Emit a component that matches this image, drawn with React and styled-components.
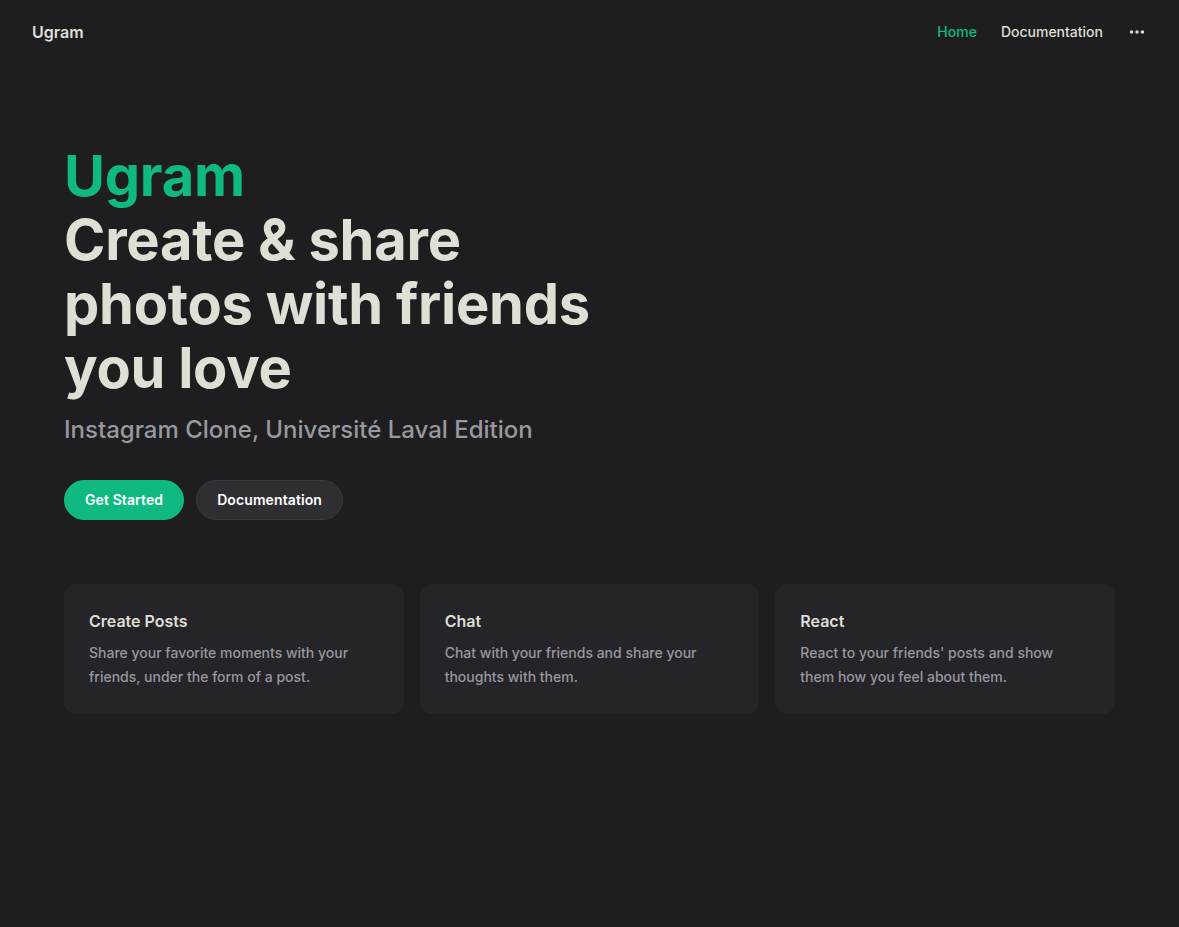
import styled, { createGlobalStyle } from 'styled-components';

const GlobalStyle = createGlobalStyle`
  html, body {
    margin: 0;
    padding: 0;
    background: #1e1e20;
    min-height: 100%;
  }
  body {
    font-family: Inter, "Noto Sans", "Liberation Sans", sans-serif;
    color: #dfdfd6;
    -webkit-font-smoothing: antialiased;
  }
  * {
    box-sizing: border-box;
  }
`;

const Page = styled.div`
  min-height: 927px;
  background: #1e1e20;
`;

const NavBar = styled.header`
  display: flex;
  align-items: center;
  justify-content: space-between;
  height: 64px;
  padding: 0 32px;
`;

const Logo = styled.a`
  font-size: 16px;
  font-weight: 600;
  color: #dfdfd6;
  text-decoration: none;
`;

const NavMenu = styled.nav`
  display: flex;
  align-items: center;
`;

const NavLink = styled.a`
  padding: 0 12px;
  line-height: 64px;
  font-size: 14px;
  font-weight: 500;
  text-decoration: none;
  color: ${(props) => (props.active ? '#10b981' : '#dfdfd6')};
`;

const ExtraButton = styled.button`
  display: flex;
  align-items: center;
  height: 64px;
  padding: 0 12px;
  margin-right: -12px;
  background: none;
  border: 0;
  color: #dfdfd6;
  cursor: pointer;
`;

const Hero = styled.section`
  padding: 80px 64px 64px;
`;

const HeroText = styled.div`
  max-width: 576px;
`;

const Name = styled.h1`
  margin: 0;
  font-size: 56px;
  line-height: 64px;
  font-weight: 700;
  letter-spacing: -0.25px;
  color: #10b981;
`;

const Title = styled.p`
  margin: 0;
  font-size: 56px;
  line-height: 64px;
  font-weight: 700;
  letter-spacing: -0.25px;
  color: #dfdfd6;
`;

const Tagline = styled.p`
  margin: 0;
  padding-top: 12px;
  font-size: 24px;
  line-height: 36px;
  font-weight: 500;
  color: #98989f;
`;

const Actions = styled.div`
  display: flex;
  gap: 12px;
  padding-top: 32px;
`;

const Button = styled.a`
  display: inline-block;
  height: 40px;
  line-height: 38px;
  padding: 0 20px;
  border-radius: 20px;
  font-size: 14px;
  font-weight: 600;
  letter-spacing: 0.1px;
  text-decoration: none;
  border: 1px solid ${(props) => (props.brand ? '#10b981' : '#3a3a3e')};
  background: ${(props) => (props.brand ? '#10b981' : '#2f2f33')};
  color: #ffffff;
`;

const Features = styled.section`
  display: grid;
  grid-template-columns: repeat(3, 1fr);
  gap: 16px;
  padding: 0 64px;
`;

const Card = styled.div`
  padding: 24px;
  border-radius: 12px;
  border: 1px solid #252529;
  background: #252529;
`;

const CardTitle = styled.h2`
  margin: 0;
  font-size: 16px;
  line-height: 24px;
  font-weight: 600;
  color: #dfdfd6;
`;

const CardText = styled.p`
  margin: 0;
  padding-top: 8px;
  font-size: 14px;
  line-height: 24px;
  font-weight: 500;
  color: #98989f;
`;

const DotsIcon = () => (
  <svg width="20" height="20" viewBox="0 0 20 20" fill="currentColor">
    <circle cx="4.6" cy="10" r="1.7" />
    <circle cx="10" cy="10" r="1.7" />
    <circle cx="15.4" cy="10" r="1.7" />
  </svg>
);

const features = [
  {
    title: 'Create Posts',
    details: 'Share your favorite moments with your friends, under the form of a post.',
  },
  {
    title: 'Chat',
    details: 'Chat with your friends and share your thoughts with them.',
  },
  {
    title: 'React',
    details: "React to your friends' posts and show them how you feel about them.",
  },
];

const App = () => {
  return (
    <Page>
      <GlobalStyle />
      <NavBar>
        <Logo href="#">Ugram</Logo>
        <NavMenu>
          <NavLink href="#" active>Home</NavLink>
          <NavLink href="#">Documentation</NavLink>
          <ExtraButton aria-label="extra navigation">
            <DotsIcon />
          </ExtraButton>
        </NavMenu>
      </NavBar>
      <Hero>
        <HeroText>
          <Name>Ugram</Name>
          <Title>Create &amp; share photos with friends you love</Title>
          <Tagline>Instagram Clone, Université Laval Edition</Tagline>
        </HeroText>
        <Actions>
          <Button href="#" brand>Get Started</Button>
          <Button href="#">Documentation</Button>
        </Actions>
      </Hero>
      <Features>
        {features.map((f) => (
          <Card key={f.title}>
            <CardTitle>{f.title}</CardTitle>
            <CardText>{f.details}</CardText>
          </Card>
        ))}
      </Features>
    </Page>
  );
};

export default App;
